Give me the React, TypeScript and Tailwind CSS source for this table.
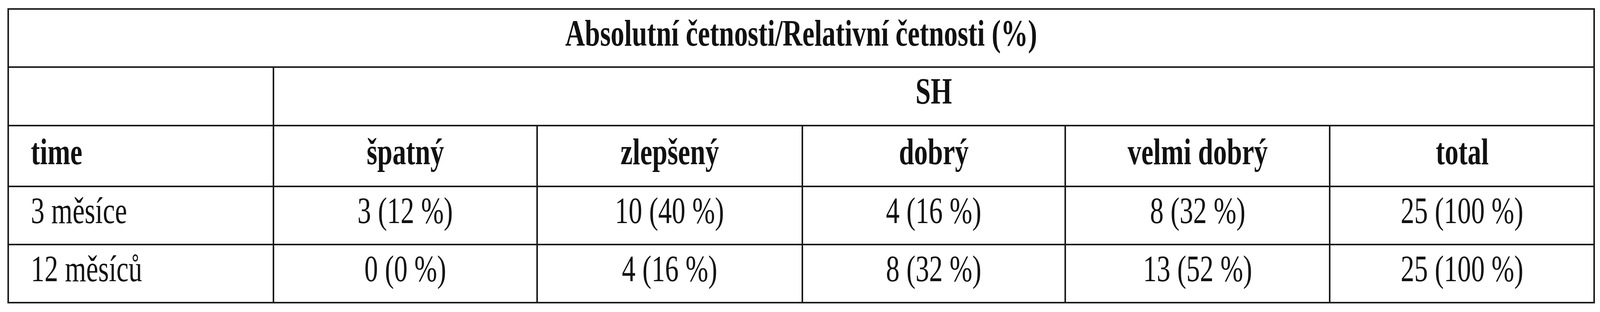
import React, { useEffect, useState } from "react";

const REF_W = 5574;

const widths = ["w-[16.577vw]", "w-[16.469vw]", "w-[16.577vw]", "w-[16.451vw]", "w-[16.523vw]", "flex-1"];

type Row = { cells: string[]; bold: boolean; h: string; pt: string };

const rows: Row[] = [
  { cells: ["time", "špatný", "zlepšený", "dobrý", "velmi dobrý", "total"], bold: true, h: "h-[155.5px]", pt: "pt-[18px]" },
  { cells: ["3 měsíce", "3 (12 %)", "10 (40 %)", "4 (16 %)", "8 (32 %)", "25 (100 %)"], bold: false, h: "h-[149.5px]", pt: "pt-[13px]" },
  { cells: ["12 měsíců", "0 (0 %)", "4 (16 %)", "8 (32 %)", "13 (52 %)", "25 (100 %)"], bold: false, h: "h-[149px]", pt: "pt-[13px]" },
];

function useScale() {
  const get = () => (typeof window !== "undefined" ? Math.min(1, window.innerWidth / REF_W) : 1);
  const [s, setS] = useState(get);
  useEffect(() => {
    const on = () => setS(get());
    on();
    window.addEventListener("resize", on);
    return () => window.removeEventListener("resize", on);
  }, []);
  return s;
}

function T({ children, s, left }: { children: React.ReactNode; s: number; left?: boolean }) {
  return (
    <span
      className={`inline-block whitespace-nowrap ${left ? "origin-left" : "origin-center"}`}
      style={{ transform: `scaleX(${s})` }}
    >
      {children}
    </span>
  );
}

export default function App() {
  const s = useScale();
  return (
    <div className="bg-white w-full h-[800px] overflow-hidden pt-[21px] pl-[0.4664vw] text-[#111] font-['Liberation_Serif','Times_New_Roman',serif] text-[95px] leading-[95px]">
      <div className="w-[99.2286vw] border-x-4 border-t-4 border-[#1a1a1a]">
        {/* Title row */}
        <div className="h-[149px] border-b-4 border-[#1a1a1a] pt-[13px] text-center font-bold">
          <T s={s}>Absolutní četnosti/Relativní četnosti (%)</T>
        </div>
        {/* SH row */}
        <div className="flex h-[150px] border-b-4 border-[#1a1a1a]">
          <div className="w-[16.577vw] shrink-0 border-r-4 border-[#1a1a1a]" />
          <div className="flex-1 pt-[13px] text-center font-bold">
            <T s={s}>SH</T>
          </div>
        </div>
        {rows.map((r, ri) => (
          <div key={ri} className={`flex ${r.h} border-b-4 border-[#1a1a1a]`}>
            {r.cells.map((c, ci) => (
              <div
                key={ci}
                className={`${widths[ci]} shrink-0 ${r.pt} ${ci < 5 ? "border-r-4 border-[#1a1a1a]" : ""} ${ci === 0 ? "pl-[1.3635vw] text-left" : "text-center"} ${r.bold ? "font-bold" : "font-normal"}`}
              >
                <T s={s} left={ci === 0}>
                  {c}
                </T>
              </div>
            ))}
          </div>
        ))}
      </div>
    </div>
  );
}
